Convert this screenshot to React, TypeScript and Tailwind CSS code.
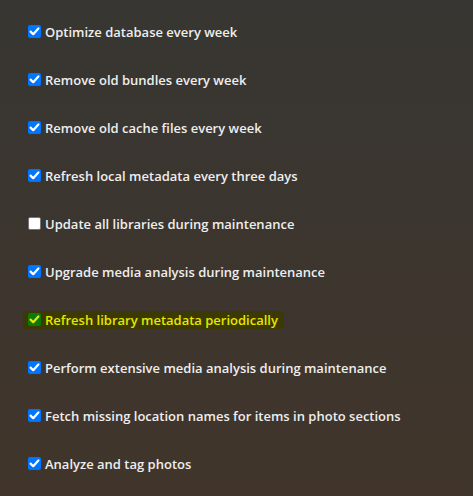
const items = [
  { label: "Optimize database every week", checked: true },
  { label: "Remove old bundles every week", checked: true },
  { label: "Remove old cache files every week", checked: true },
  { label: "Refresh local metadata every three days", checked: true },
  { label: "Update all libraries during maintenance", checked: false },
  { label: "Upgrade media analysis during maintenance", checked: true },
  { label: "Refresh library metadata periodically", checked: true, highlight: true },
  { label: "Perform extensive media analysis during maintenance", checked: true },
  { label: "Fetch missing location names for items in photo sections", checked: true },
  { label: "Analyze and tag photos", checked: true },
];

function Box({ checked, highlight }: { checked: boolean; highlight?: boolean }) {
  if (!checked) {
    return <span className="w-[13px] h-[13px] rounded-[2px] bg-white border border-[#767676] shrink-0 translate-y-[1px]" />;
  }
  return (
    <span
      className={`w-[13px] h-[13px] rounded-[2px] shrink-0 flex items-center justify-center translate-y-[1px] ${
        highlight ? "bg-[#0b7a0b]" : "bg-[#0075ff]"
      }`}
    >
      <svg viewBox="0 0 13 13" className="w-[13px] h-[13px]">
        <path
          d="M2.6 6.6 L5.2 9.2 L10.4 3.4"
          fill="none"
          stroke={highlight ? "#e8e800" : "#ffffff"}
          strokeWidth="2.2"
          strokeLinecap="round"
          strokeLinejoin="round"
        />
      </svg>
    </span>
  );
}

export default function App() {
  return (
    <div className="w-[473px] h-[496px] bg-gradient-to-b from-[#373632] to-[#41352b] pt-[8px] font-['Open_Sans',sans-serif] text-[13px] font-semibold text-[#eeeeee] overflow-hidden">
      {items.map((it) => (
        <div key={it.label} className="h-[48px] flex items-center pl-[28px]">
          <label
            className={`flex items-baseline gap-[4px] leading-[18px] ${
              it.highlight ? "bg-[#3b3a04] text-[#e6e600] -ml-[5px] pl-[5px] pr-[6px]" : ""
            }`}
          >
            <Box checked={it.checked} highlight={it.highlight} />
            <span>{it.label}</span>
          </label>
        </div>
      ))}
    </div>
  );
}
